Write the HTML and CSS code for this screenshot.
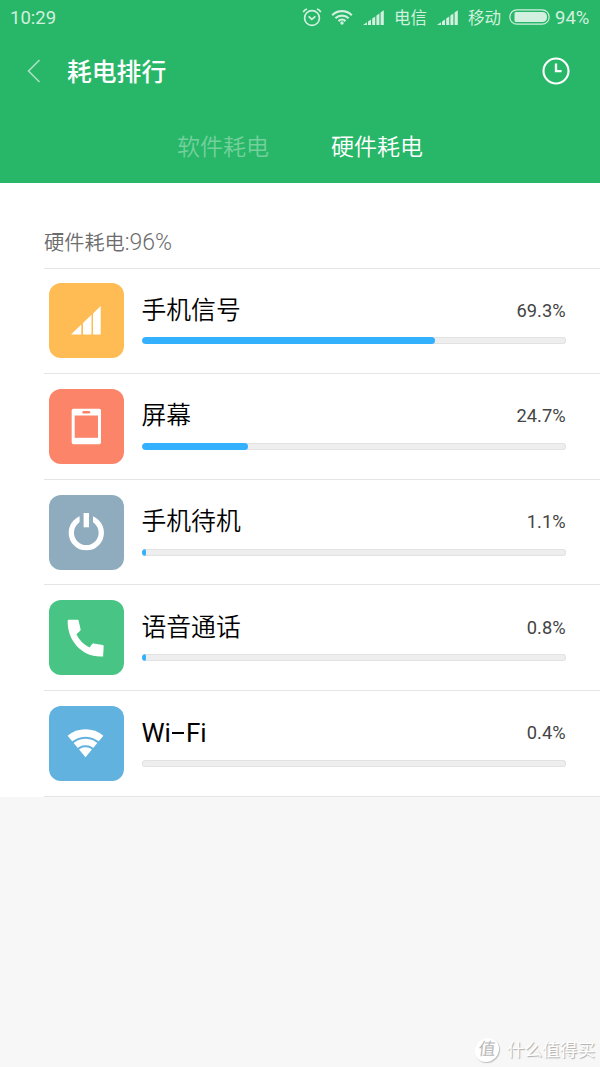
FILE: index.html
```
<!DOCTYPE html>
<html lang="zh-CN">
<head>
  <meta charset="utf-8">
  <title>耗电排行</title>
  <link rel="stylesheet" href="styles.css">
</head>
<body>

<div class="header">
  <div class="status">
    <span class="time">10:29</span>
    <svg class="alarm" width="20" height="20" viewBox="0 0 20 20" fill="none" stroke="currentColor">
      <circle cx="10" cy="11" r="7.4" stroke-width="1.7"/>
      <path d="M6.6 9.3l3.2 3 3.6-3" stroke-width="1.7"/>
      <path d="M1.2 5.2Q2.4 2.8 5 2M18.8 5.2Q17.6 2.8 15 2" stroke-width="1.7"/>
    </svg>
    <svg class="wifi" width="22" height="16" viewBox="0 0 22 16" fill="none" stroke="currentColor" stroke-width="2.2">
      <path d="M1.2 6.2a14 14 0 0 1 19.6 0M4.4 9.2a9.5 9.5 0 0 1 13.2 0M7.5 12.1a5 5 0 0 1 7 0"/>
      <circle cx="11" cy="14" r="1.7" fill="currentColor" stroke="none"/>
    </svg>
    <svg class="signal" width="21" height="15" viewBox="0 0 21 15" fill="currentColor">
      <path d="M0 15L4 12.2V15zM5 11.5L8 9.4V15H5zM9.2 8.5L12.2 6.4V15H9.2zM13.4 5.5L16.4 3.4V15H13.4zM17.6 2.5L20.8 .3V15H17.6z"/>
    </svg>
    <span class="carrier">电信</span>
    <svg class="signal" width="21" height="15" viewBox="0 0 21 15" fill="currentColor">
      <path d="M0 15L4 12.2V15zM5 11.5L8 9.4V15H5zM9.2 8.5L12.2 6.4V15H9.2zM13.4 5.5L16.4 3.4V15H13.4zM17.6 2.5L20.8 .3V15H17.6z"/>
    </svg>
    <span class="carrier">移动</span>
    <svg class="battery" width="41" height="16" viewBox="0 0 41 16">
      <rect x=".8" y=".8" width="39.4" height="14.4" rx="7.2" fill="none" stroke="currentColor" stroke-width="1.2"/>
      <path d="M7 3H34Q38 3.5 38 8T34 13H7Q5.5 13 5.5 11.5V4.5Q5.5 3 7 3z" fill="currentColor"/>
    </svg>
    <span class="level">94%</span>
  </div>

  <div class="titlebar">
    <svg class="back" width="14" height="24" viewBox="0 0 14 24" fill="none" stroke="currentColor" stroke-width="1.6">
      <path d="M12.5 1L1.5 12l11 11"/>
    </svg>
    <h1>耗电排行</h1>
    <svg class="clock" width="28" height="28" viewBox="0 0 28 28" fill="none" stroke="#fff">
      <circle cx="14" cy="14" r="12.5" stroke-width="2.1"/>
      <path d="M14 6.5v7.6h5.6" stroke-width="2.3"/>
    </svg>
  </div>

  <div class="tabs">
    <span class="tab">软件耗电</span>
    <span class="tab active">硬件耗电</span>
  </div>
</div>

<div class="content">
  <div class="total">硬件耗电<span class="num">:96%</span></div>

  <div class="row">
    <svg class="icon" viewBox="0 0 75 75">
      <rect width="75" height="75" rx="12" fill="#ffbc54"/>
      <path d="M22 51.5L32.3 41.5V51.5zM34 40L42.5 31.8V51.5H34zM44 30.4L51.7 23V51.5H44z" fill="#fff"/>
    </svg>
    <div class="info">
      <div class="line"><span class="name">手机信号</span><span class="pct">69.3%</span></div>
      <div class="bar"><div class="fill" style="width:69.1%"></div></div>
    </div>
  </div>

  <div class="row">
    <svg class="icon" viewBox="0 0 75 75">
      <rect width="75" height="75" rx="12" fill="#fb8469"/>
      <rect x="22.7" y="19.7" width="29.3" height="35.6" rx="1.8" fill="#fff"/>
      <rect x="25.7" y="26.5" width="23.3" height="22.3" fill="#fb8469"/>
      <rect x="33.3" y="21.9" width="8" height="2.7" rx="1.3" fill="#fb8469"/>
    </svg>
    <div class="info">
      <div class="line"><span class="name">屏幕</span><span class="pct">24.7%</span></div>
      <div class="bar"><div class="fill" style="width:25%"></div></div>
    </div>
  </div>

  <div class="row">
    <svg class="icon" viewBox="0 0 75 75">
      <rect width="75" height="75" rx="12" fill="#8facbf"/>
      <circle cx="37.3" cy="37.7" r="15" fill="none" stroke="#fff" stroke-width="5.3"/>
      <rect x="30.6" y="18" width="13.4" height="12" fill="#8facbf"/>
      <rect x="34.6" y="18" width="5.4" height="14.3" fill="#fff"/>
    </svg>
    <div class="info">
      <div class="line"><span class="name">手机待机</span><span class="pct">1.1%</span></div>
      <div class="bar"><div class="fill" style="width:1.1%"></div></div>
    </div>
  </div>

  <div class="row">
    <svg class="icon" viewBox="0 0 75 75">
      <rect width="75" height="75" rx="12" fill="#48c584"/>
      <path d="M19.7 19.7H28.6Q29.4 19.7 29.6 20.5L31.6 29.6Q31.7 30.4 31.2 30.8L27.4 34.2Q31.5 43 40.5 47.4L43.4 43.8Q43.8 43.2 44.6 43.4L53.8 45Q54.8 45.2 54.7 46.2L54.1 56.4C34 58 18 41 18.7 20.7Q18.7 19.7 19.7 19.7z" fill="#fff"/>
    </svg>
    <div class="info">
      <div class="line"><span class="name">语音通话</span><span class="pct">0.8%</span></div>
      <div class="bar"><div class="fill" style="width:1.1%"></div></div>
    </div>
  </div>

  <div class="row">
    <svg class="icon" viewBox="0 0 75 75">
      <rect width="75" height="75" rx="12" fill="#61b2df"/>
      <path d="M36.5 51.3L18.6 29.8A28 28 0 0 1 54.4 29.8z" fill="#fff"/>
      <path d="M22 38.2A19.6 19.6 0 0 1 51 38.2M27 45.8A11 11 0 0 1 46 45.8" fill="none" stroke="#61b2df" stroke-width="2"/>
    </svg>
    <div class="info">
      <div class="line"><span class="name latin">Wi<i class="dash"></i>Fi</span><span class="pct">0.4%</span></div>
      <div class="bar"></div>
    </div>
  </div>
</div>

<div class="watermark">
  <span class="badge">值</span>
  <span>什么值得买</span>
</div>

</body>
</html>
```
FILE: styles.css
```
body {
  margin: 0;
  min-height: 1067px;
  background: #f7f7f7;
  font-family: Roboto, "Noto Sans CJK SC", sans-serif;
  position: relative;
}

svg {
  display: block;
  flex: none;
}

.header {
  height: 183px;
  background: #28b768;
  color: #fff;
}

/* status bar */
.status {
  display: flex;
  align-items: center;
  height: 34px;
  padding: 0 10px;
  color: #d2f0df;
  font-size: 18.5px;
  line-height: 34px;
  white-space: nowrap;
}

.time {
  flex: 1;
  padding-top: 1px;
}

.alarm {
  margin-left: 1px;
  margin-right: 9px;
  margin-top: -1px;
}

.wifi { margin-right: 10px; }
.signal { margin-right: 10px; }

.carrier {
  width: 33px;
  margin-right: 10px;
  padding-top: 3px;
  font-size: 16.5px;
}

.carrier + .battery {
  margin-left: -2px;
}

.level {
  width: 35px;
  margin-left: 5px;
  padding-top: 1px;
  font-size: 18.5px;
}

.titlebar {
  display: flex;
  align-items: center;
  height: 74px;
  padding: 0 30px 0 27px;
}

.back {
  color: #a9e2c3;
}

h1 {
  flex: 1;
  margin: 0 0 0 26px;
  padding-top: 4px;
  font-size: 24.8px;
  font-weight: 500;
  line-height: 36px;
}

.tabs {
  display: flex;
  justify-content: center;
  gap: 62px;
  padding-top: 23px;
  font-size: 23px;
  font-weight: 350;
  line-height: 34px;
}

.tab {
  color: #74d09c;
}

.tab.active {
  color: #fff;
}

/* list */
.content {
  background: #fff;
  padding-left: 44px;
}

.total {
  height: 84.6px;
  padding-top: 45px;
  box-sizing: border-box;
  color: #6c6c6c;
  font-size: 20.2px;
  font-weight: 350;
  line-height: 30px;
}

.num {
  font-size: 23px;
  font-weight: 300;
}

.row {
  display: flex;
  align-items: center;
  box-sizing: border-box;
  height: 105.6px;
  padding: 0 34.4px 0 5px;
  border-top: 1px solid #e5e5e5;
}

.row:last-child {
  height: 106.6px;
  border-bottom: 1px solid #e5e5e5;
}

.icon {
  width: 75px;
  height: 75px;
}

.info {
  flex: 1;
  margin-left: 17.5px;
  padding-bottom: 6px;
}

.line {
  display: flex;
  align-items: center;
  justify-content: space-between;
  height: 38px;
}

.name {
  padding-top: 1px;
  color: #000;
  font-size: 24.8px;
  font-weight: 350;
  line-height: 38px;
}

.latin {
  padding-top: 0;
  font-size: 26px;
  font-weight: 400;
}

.dash {
  display: inline-block;
  width: 12px;
  height: 2px;
  margin: 0 1.5px;
  background: #000;
  vertical-align: 8px;
}

.pct {
  color: #444;
  font-size: 18.3px;
}

.bar {
  box-sizing: border-box;
  height: 7px;
  margin-top: 8px;
  border-radius: 4px;
  background: #eee;
  box-shadow: inset 0 0 0 1px #e2e2e2;
  overflow: hidden;
}

.fill {
  height: 7px;
  border-radius: 4px;
  background: #33b1ff;
}

/* site mark over the page corner */
.watermark {
  position: absolute;
  right: 5px;
  bottom: 4px;
  display: flex;
  align-items: center;
  gap: 8px;
  color: #fff;
  font-size: 17.6px;
  line-height: 26px;
  text-shadow: 1px 1px 1px #aaa;
}

.badge {
  width: 24px;
  height: 24px;
  border-radius: 50%;
  background: #fff;
  box-shadow: 1px 1px 1px #bbb;
  color: #b8b8b8;
  font-size: 17px;
  line-height: 23px;
  text-align: center;
  text-shadow: none;
  transform: skewX(-6deg);
}
```
